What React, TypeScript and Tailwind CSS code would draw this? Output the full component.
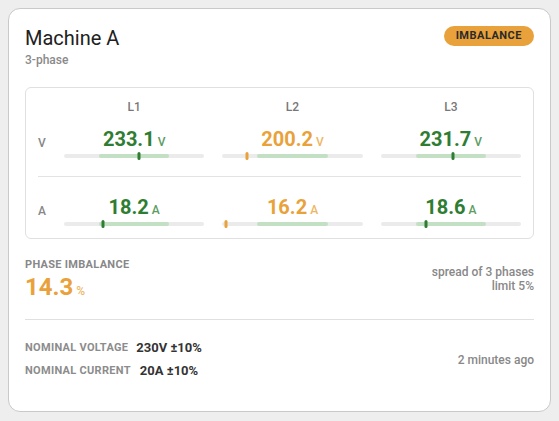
import React from 'react';

type Tone = 'ok' | 'warn';

interface Cell {
  value: number;
  pos: number; // 0..100 marker position on track
  tone: Tone;
}

const toneText: Record<Tone, string> = {
  ok: 'text-[#2e7d32]',
  warn: 'text-[#e9a23b]',
};
const toneUnit: Record<Tone, string> = {
  ok: 'text-[#5e9c62]',
  warn: 'text-[#eeb766]',
};
const toneMarker: Record<Tone, string> = {
  ok: 'bg-[#2e7d32]',
  warn: 'bg-[#e9a23b]',
};

const voltage: Cell[] = [
  { value: 233.1, pos: 53.4, tone: 'ok' },
  { value: 200.2, pos: 17.6, tone: 'warn' },
  { value: 231.7, pos: 51.8, tone: 'ok' },
];

const current: Cell[] = [
  { value: 18.2, pos: 27.5, tone: 'ok' },
  { value: 16.2, pos: 2.5, tone: 'warn' },
  { value: 18.6, pos: 32.5, tone: 'ok' },
];

const Reading: React.FC<{ cell: Cell; unit: string }> = ({ cell, unit }) => (
  <div className="flex flex-col">
    <div className="flex items-baseline justify-center h-6 leading-6">
      <span className={`text-[20px] font-bold ${toneText[cell.tone]}`}>{cell.value.toFixed(1)}</span>
      <span className={`ml-[3px] text-[12px] font-medium ${toneUnit[cell.tone]}`}>{unit}</span>
    </div>
    <div className="relative mt-[3px] h-1 rounded-full bg-[#ebebeb]">
      <div className="absolute top-0 bottom-0 left-1/4 w-1/2 rounded-full bg-[#c3dfc4]" />
      <div
        className={`absolute top-1/2 h-2 w-[3px] -translate-x-1/2 -translate-y-1/2 rounded-full ${toneMarker[cell.tone]}`}
        style={{ left: `${cell.pos}%` }}
      />
    </div>
  </div>
);

const Row: React.FC<{ label: string; unit: string; cells: Cell[] }> = ({ label, unit, cells }) => (
  <div className="grid grid-cols-[8px_1fr_1fr_1fr] gap-x-[18px] items-center">
    <span className="text-[12px] font-medium text-[#888]">{label}</span>
    {cells.map((c, i) => (
      <Reading key={i} cell={c} unit={unit} />
    ))}
  </div>
);

export default function App() {
  return (
    <div className="min-h-screen bg-[#eeeeee] p-2 font-['Roboto',sans-serif]">
      <div className="w-[543px] h-[404px] rounded-[12px] border border-[#c9c9c9] bg-white px-4 pt-[15px]">
        <header className="flex items-start justify-between">
          <div>
            <h1 className="text-[20px] leading-7 text-[#212121]">Machine A</h1>
            <div className="text-[12px] leading-4 font-medium text-[#8a8a8a]">3-phase</div>
          </div>
          <span className="mt-[2px] rounded-full bg-[#e9a23b] px-3 h-5 leading-5 text-[11px] font-bold tracking-[0.5px] text-[#2a2a2a]">
            IMBALANCE
          </span>
        </header>

        <section className="mt-[19px] rounded-[6px] border border-[#e0e0e0] px-3 pt-[11px] pb-[12px]">
          <div className="grid grid-cols-[8px_1fr_1fr_1fr] gap-x-[18px] text-center text-[12px] leading-4 font-medium text-[#777]">
            <span />
            <span>L1</span>
            <span>L2</span>
            <span>L3</span>
          </div>
          <div className="mt-[12px] pb-[18px] border-b border-[#e3e3e3]">
            <Row label="V" unit="V" cells={voltage} />
          </div>
          <div className="pt-[18px]">
            <Row label="A" unit="A" cells={current} />
          </div>
        </section>

        <section className="mt-[18px] flex items-center justify-between pb-[18px] border-b border-[#e0e0e0]">
          <div>
            <div className="text-[11px] leading-4 font-bold tracking-[0.3px] text-[#888]">PHASE IMBALANCE</div>
            <div className="flex items-baseline h-7 leading-7">
              <span className="text-[24px] font-bold text-[#e9a23b]">14.3</span>
              <span className="ml-[3px] text-[12px] font-medium text-[#eeb766]">%</span>
            </div>
          </div>
          <div className="text-right text-[12px] leading-[14px] font-medium text-[#888]">
            <div>spread of 3 phases</div>
            <div>limit 5%</div>
          </div>
        </section>

        <section className="mt-[18px] flex items-center justify-between">
          <div className="flex flex-col gap-[3px]">
            <div className="flex items-center h-5">
              <span className="text-[11px] font-bold tracking-[0.3px] text-[#8c8c8c]">NOMINAL VOLTAGE</span>
              <span className="ml-2 text-[13px] font-bold text-[#333]">230V ±10%</span>
            </div>
            <div className="flex items-center h-5">
              <span className="text-[11px] font-bold tracking-[0.3px] text-[#8c8c8c]">NOMINAL CURRENT</span>
              <span className="ml-[9px] text-[13px] font-bold text-[#333]">20A ±10%</span>
            </div>
          </div>
          <span className="text-[12px] font-medium text-[#888]">2 minutes ago</span>
        </section>
      </div>
    </div>
  );
}
